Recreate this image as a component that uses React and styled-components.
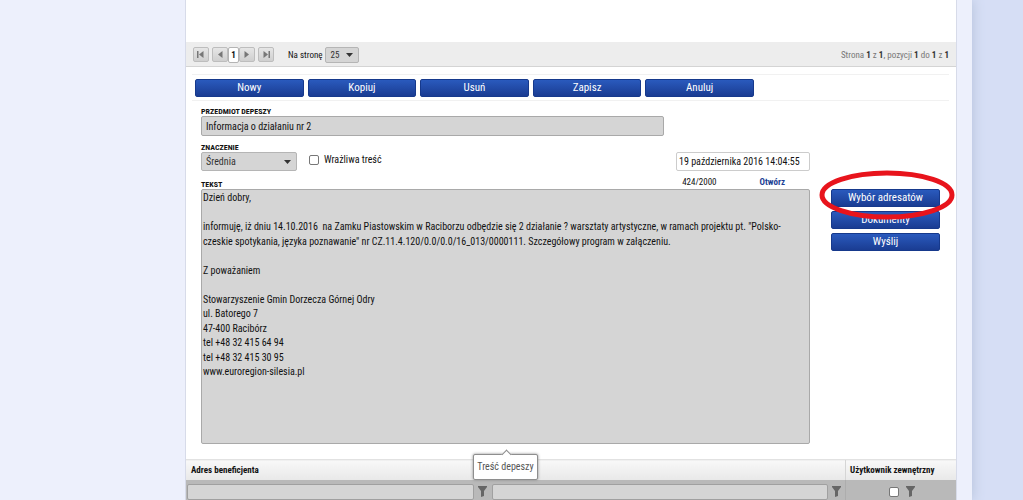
import React from 'react';
import styled, { createGlobalStyle } from 'styled-components';

const colors = {
  page: '#edf0fc',
  outer: '#d6def5',
  panel: '#ffffff',
  bar: '#ededed',
  field: '#d5d5d5',
  fieldBorder: '#a9a9a9',
  text: '#111111',
  muted: '#777777',
  link: '#1c3f94',
  mark: '#e8141c',
};

const message = `Dzień dobry,

informuję, iż dniu 14.10.2016  na Zamku Piastowskim w Raciborzu odbędzie się 2 działanie ? warsztaty artystyczne, w ramach projektu pt. "Polsko-
czeskie spotykania, języka poznawanie" nr CZ.11.4.120/0.0/0.0/16_013/0000111. Szczegółowy program w załączeniu.

Z poważaniem

Stowarzyszenie Gmin Dorzecza Górnej Odry
ul. Batorego 7
47-400 Racibórz
tel +48 32 415 64 94
tel +48 32 415 30 95
www.euroregion-silesia.pl`;

const GlobalStyle = createGlobalStyle`
  * {
    box-sizing: border-box;
  }

  body {
    margin: 0;
    background: ${colors.outer};
    color: ${colors.text};
    font: 10px/14px 'Roboto Condensed', 'Liberation Sans Narrow', Roboto, sans-serif;
  }

  button, input, select, textarea {
    margin: 0;
    font: inherit;
    color: inherit;
  }
`;

const Page = styled.div`
  display: flex;
  min-height: 100vh;
  overflow: hidden;
  max-height: 100vh;
  margin-right: 51px;
  padding: 0 15px 0 185px;
  background: ${colors.page};
  box-shadow: 0 0 12px #b3c0d8;
`;

const Panel = styled.main`
  flex: 1;
  min-width: 0;
  border: 1px solid #d7dbe9;
  border-width: 0 1px;
  background: ${colors.panel};
`;

const Pager = styled.nav`
  display: flex;
  align-items: center;
  margin-top: 42px;
  height: 25px;
  padding: 1px 7px 0;
  border-bottom: 1px solid #d4d4d4;
  background: ${colors.bar};
  font-size: 9px;
`;

const PagerButton = styled.button`
  display: flex;
  align-items: center;
  justify-content: center;
  width: 16px;
  height: 15px;
  margin-right: ${({ $gap }) => $gap || 0}px;
  padding: 0;
  border: 1px solid #bdbdbd;
  border-radius: 2px;
  background: linear-gradient(#e6e6e6, #cfcfcf);
`;

const CurrentPage = styled.span`
  width: 11px;
  border: 1px solid #b4b4b4;
  border-radius: 2px;
  background: #fff;
  font-weight: bold;
  text-align: center;
`;

const PageSize = styled.label`
  display: flex;
  align-items: center;
  gap: 3px;
  margin-left: 14px;
`;

const SelectBox = styled.span`
  display: grid;
  align-items: center;
  width: ${({ $width }) => $width}px;

  > * {
    grid-area: 1 / 1;
  }

  > svg {
    justify-self: end;
    margin-right: 6px;
    pointer-events: none;
  }
`;

const Select = styled.select`
  width: 100%;
  height: ${({ $height }) => $height}px;
  padding: 0 4px;
  border: 1px solid #b5b5b5;
  border-radius: 2px;
  background: ${colors.field};
  color: #333;
  appearance: none;
`;

const Summary = styled.span`
  margin-left: auto;
  color: ${colors.muted};

  b {
    color: #333;
  }
`;

const Toolbar = styled.div`
  margin: 7px 7px 0 6px;
  padding: 4px 3px 3px;
  border: 1px solid #f1f1f1;
  border-width: 1px 0;
`;

const ToolbarButtons = styled.div`
  display: flex;
  gap: 4px;
  max-width: 559px;
`;

const Button = styled.button`
  flex: 1;
  height: 18px;
  padding: 0;
  border: 1px solid #16398c;
  border-radius: 2px;
  background: linear-gradient(#2a5abd, #1a3c92);
  color: #fff;
  font-size: 11px;
  line-height: 16px;
`;

const Form = styled.form`
  display: flex;
  gap: 21px;
  padding: 6px 16px 15px 15px;
`;

const Fields = styled.div`
  flex: 1;
  min-width: 0;
`;

const Label = styled.label`
  display: block;
  font-size: 8px;
  font-weight: bold;
  line-height: 9px;
  text-transform: uppercase;
`;

const Subject = styled.input`
  display: block;
  width: 76%;
  height: 20px;
  padding: 0 4px;
  border: 1px solid ${colors.fieldBorder};
  border-radius: 2px;
  background: ${colors.field};
`;

const Options = styled.div`
  display: flex;
  align-items: end;
  margin-top: 7px;
`;

const CheckLabel = styled.label`
  display: flex;
  align-items: center;
  gap: 5px;
  margin: 0 0 4px 12px;
`;

const Checkbox = styled.input`
  width: 10px;
  height: 10px;
  border: 1px solid #777;
  border-radius: 2px;
  background: #fff;
  appearance: none;
`;

const DateInput = styled.input`
  width: 134px;
  height: 19px;
  margin-left: auto;
  padding: 0 2px;
  border: 1px solid #ccc;
  border-radius: 2px;
  background: #fff;
`;

const TextHead = styled.div`
  display: flex;
  align-items: end;
  height: 18px;
  font-size: 9px;
`;

const Counter = styled.span`
  margin-left: auto;
`;

const OpenLink = styled.a`
  margin: 0 25px 0 43px;
  color: ${colors.link};
  font-weight: bold;
  text-decoration: none;
`;

const TextArea = styled.textarea`
  display: block;
  width: 100%;
  height: 255px;
  padding: 1px;
  border: 1px solid ${colors.fieldBorder};
  border-radius: 2px;
  background: ${colors.field};
  line-height: 1.45;
  resize: none;
`;

const Actions = styled.div`
  position: relative;
  display: grid;
  grid-auto-rows: 18px;
  gap: 4px;
  align-content: start;
  width: 109px;
  padding-top: 82px;
`;

const Highlight = styled.svg`
  position: absolute;
  top: 62px;
  left: -12px;
  pointer-events: none;
`;

const Table = styled.table`
  width: 100%;
  border-collapse: collapse;
  table-layout: fixed;
`;

const HeadCell = styled.th`
  position: relative;
  width: ${({ $width }) => $width || 'auto'};
  height: 20px;
  padding: 0 5px;
  border-top: 1px solid #e2e2e2;
  background: linear-gradient(#f8f8f8, #e8e8e8);
  box-shadow: ${({ $divider }) => ($divider ? 'inset 1px 0 #d5d5d5' : 'none')};
  font-size: 9px;
  text-align: left;
`;

const FilterCell = styled.td`
  height: 24px;
  padding: 2px 4px 2px 1px;
  background: #b9b9b9;
  box-shadow: ${({ $divider }) => ($divider ? 'inset 1px 0 #adadad' : 'none')};
`;

const Filter = styled.div`
  display: flex;
  align-items: center;
  justify-content: center;
  gap: ${({ $gap }) => $gap}px;
  padding-left: ${({ $indent }) => $indent || 0}px;
`;

const FilterInput = styled.input`
  flex: 1;
  min-width: 0;
  height: 16px;
  border: 1px solid #a0a0a0;
  border-radius: 2px;
  background: ${colors.field};
`;

const FilterButton = styled.button`
  display: flex;
  padding: 0;
  border: 0;
  background: none;
`;

const Tooltip = styled.div`
  position: absolute;
  top: -6px;
  left: -18px;
  width: 65px;
  padding: 5px 0;
  border: 1px solid #8e8e8e;
  border-radius: 2px;
  background: #fff;
  box-shadow: 0 0 3px #888;
  color: #555;
  font-size: 10px;
  font-weight: normal;
  text-align: center;

  &::before {
    position: absolute;
    top: -4px;
    left: 29px;
    width: 6px;
    height: 6px;
    border: 1px solid #8e8e8e;
    border-width: 1px 0 0 1px;
    background: #fff;
    content: '';
    transform: rotate(45deg);
  }
`;

const Arrow = () => (
  <svg width="7" height="4" viewBox="0 0 7 4" aria-hidden="true">
    <path d="M0 0h7L3.5 4z" fill="#333" />
  </svg>
);

const PagerIcon = ({ forward, edge }) => (
  <svg width="8" height="7" viewBox="0 0 8 7" fill="#777" aria-hidden="true">
    <g transform={forward ? 'rotate(180 4 3.5)' : undefined}>
      <path d="M6.5 0v7L2 3.5z" />
      {edge && <path d="M0 0h1.5v7H0z" />}
    </g>
  </svg>
);

const FilterIcon = () => (
  <svg width="9" height="11" viewBox="0 0 9 11" aria-hidden="true">
    <path d="M0 0h9v1L6 5v5L3 11V5L0 1z" fill="#666" />
  </svg>
);

const App = () => (
  <>
    <GlobalStyle />
    <Page>
      <Panel>
        <Pager aria-label="Strony">
          <PagerButton type="button" aria-label="Pierwsza" $gap={3}>
            <PagerIcon edge />
          </PagerButton>
          <PagerButton type="button" aria-label="Poprzednia">
            <PagerIcon />
          </PagerButton>
          <CurrentPage>1</CurrentPage>
          <PagerButton type="button" aria-label="Następna" $gap={3}>
            <PagerIcon forward />
          </PagerButton>
          <PagerButton type="button" aria-label="Ostatnia">
            <PagerIcon forward edge />
          </PagerButton>
          <PageSize>
            Na stronę
            <SelectBox $width={34}>
              <Select $height={16} defaultValue="25">
                <option>25</option>
              </Select>
              <Arrow />
            </SelectBox>
          </PageSize>
          <Summary>
            Strona <b>1</b> z <b>1</b>, pozycji <b>1</b> do <b>1</b> z <b>1</b>
          </Summary>
        </Pager>
        <Toolbar>
          <ToolbarButtons>
            {['Nowy', 'Kopiuj', 'Usuń', 'Zapisz', 'Anuluj'].map(name => (
              <Button key={name} type="button">
                {name}
              </Button>
            ))}
          </ToolbarButtons>
        </Toolbar>
        <Form>
          <Fields>
            <Label htmlFor="subject">Przedmiot depeszy</Label>
            <Subject id="subject" defaultValue="Informacja o działaniu nr 2" />
            <Options>
              <div>
                <Label htmlFor="priority">Znaczenie</Label>
                <SelectBox $width={96}>
                  <Select id="priority" $height={19} defaultValue="Średnia">
                    <option>Średnia</option>
                  </Select>
                  <Arrow />
                </SelectBox>
              </div>
              <CheckLabel>
                <Checkbox type="checkbox" />
                Wrażliwa treść
              </CheckLabel>
              <DateInput
                aria-label="Data"
                defaultValue="19 października 2016 14:04:55"
              />
            </Options>
            <TextHead>
              <Label htmlFor="text">Tekst</Label>
              <Counter>424/2000</Counter>
              <OpenLink href="#text">Otwórz</OpenLink>
            </TextHead>
            <TextArea id="text" defaultValue={message} />
          </Fields>
          <Actions>
            <Button type="button">Wybór adresatów</Button>
            <Button type="button">Dokumenty</Button>
            <Button type="button">Wyślij</Button>
            <Highlight width="136" height="52" viewBox="0 0 136 52">
              <ellipse
                cx="68"
                cy="26"
                rx="65"
                ry="22"
                fill="none"
                stroke={colors.mark}
                strokeWidth="5"
              />
            </Highlight>
          </Actions>
        </Form>
        <Table>
          <thead>
            <tr>
              <HeadCell $width="305px">Adres beneficjenta</HeadCell>
              <HeadCell>
                <Tooltip role="tooltip">Treść depeszy</Tooltip>
              </HeadCell>
              <HeadCell $width="111px" $divider>
                Użytkownik zewnętrzny
              </HeadCell>
            </tr>
          </thead>
          <tbody>
            <tr>
              <FilterCell>
                <Filter $gap={4}>
                  <FilterInput aria-label="Adres beneficjenta" />
                  <FilterButton type="button" aria-label="Filtruj adres">
                    <FilterIcon />
                  </FilterButton>
                </Filter>
              </FilterCell>
              <FilterCell>
                <Filter $gap={4}>
                  <FilterInput aria-label="Nazwa" />
                  <FilterButton type="button" aria-label="Filtruj nazwę">
                    <FilterIcon />
                  </FilterButton>
                </Filter>
              </FilterCell>
              <FilterCell $divider>
                <Filter $gap={7} $indent={6}>
                  <Checkbox type="checkbox" aria-label="Użytkownik zewnętrzny" />
                  <FilterButton type="button" aria-label="Filtruj użytkowników">
                    <FilterIcon />
                  </FilterButton>
                </Filter>
              </FilterCell>
            </tr>
          </tbody>
        </Table>
      </Panel>
    </Page>
  </>
);

export default App;
